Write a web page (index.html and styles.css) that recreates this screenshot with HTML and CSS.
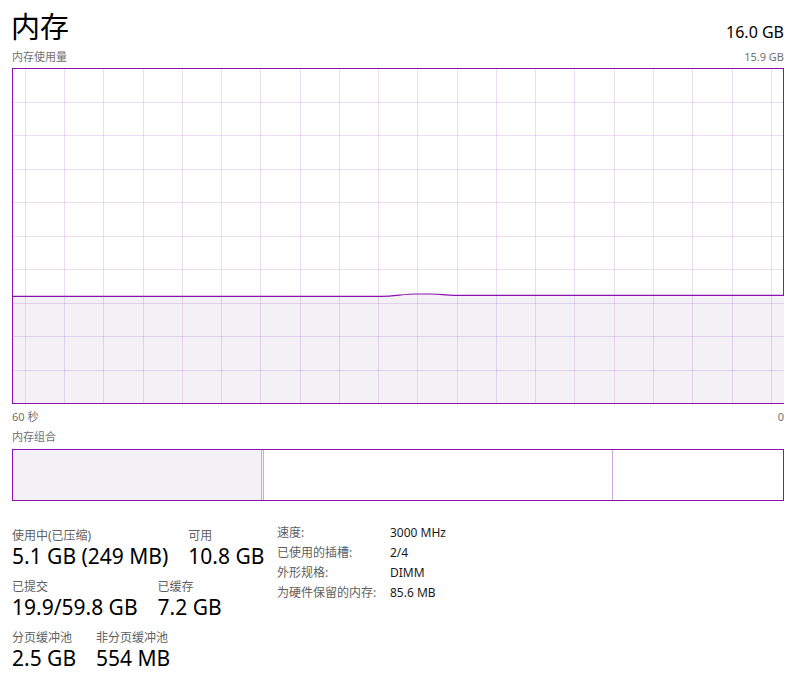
FILE: index.html
```html
<!DOCTYPE html>
<html lang="zh-CN">
<head>
<meta charset="utf-8">
<title>内存</title>
<link rel="stylesheet" href="styles.css">
</head>
<body>
<div class="page">
  <div class="top">
    <div class="title">内存</div>
    <div class="total">16.0 GB</div>
  </div>
  <div class="caption-row">
    <span>内存使用量</span>
    <span>15.9 GB</span>
  </div>
  <div class="graph">
    <svg class="graph-svg" viewBox="0 0 771 334" width="771" height="334" preserveAspectRatio="none">
      <path class="fill" d="M0 227.3 L369 227.3 C380 227.3 392 225 402 225 L418 225 C428 225 432 226.3 442 226.3 L771 226.3 L771 334 L0 334 Z"/>
      <g class="grid">
        <line x1="12.3" y1="0" x2="12.3" y2="334"/>
        <line x1="51.6" y1="0" x2="51.6" y2="334"/>
        <line x1="90.8" y1="0" x2="90.8" y2="334"/>
        <line x1="130.1" y1="0" x2="130.1" y2="334"/>
        <line x1="169.3" y1="0" x2="169.3" y2="334"/>
        <line x1="208.6" y1="0" x2="208.6" y2="334"/>
        <line x1="247.9" y1="0" x2="247.9" y2="334"/>
        <line x1="287.1" y1="0" x2="287.1" y2="334"/>
        <line x1="326.4" y1="0" x2="326.4" y2="334"/>
        <line x1="365.6" y1="0" x2="365.6" y2="334"/>
        <line x1="404.9" y1="0" x2="404.9" y2="334"/>
        <line x1="444.2" y1="0" x2="444.2" y2="334"/>
        <line x1="483.4" y1="0" x2="483.4" y2="334"/>
        <line x1="522.7" y1="0" x2="522.7" y2="334"/>
        <line x1="561.9" y1="0" x2="561.9" y2="334"/>
        <line x1="601.2" y1="0" x2="601.2" y2="334"/>
        <line x1="640.5" y1="0" x2="640.5" y2="334"/>
        <line x1="679.7" y1="0" x2="679.7" y2="334"/>
        <line x1="719.0" y1="0" x2="719.0" y2="334"/>
        <line x1="758.2" y1="0" x2="758.2" y2="334"/>
        <line x1="0" y1="33.3" x2="771" y2="33.3"/>
        <line x1="0" y1="66.8" x2="771" y2="66.8"/>
        <line x1="0" y1="100.3" x2="771" y2="100.3"/>
        <line x1="0" y1="133.8" x2="771" y2="133.8"/>
        <line x1="0" y1="167.3" x2="771" y2="167.3"/>
        <line x1="0" y1="200.8" x2="771" y2="200.8"/>
        <line x1="0" y1="234.3" x2="771" y2="234.3"/>
        <line x1="0" y1="267.8" x2="771" y2="267.8"/>
        <line x1="0" y1="301.3" x2="771" y2="301.3"/>
      </g>
      <path class="line" d="M0 227.3 L369 227.3 C380 227.3 392 225 402 225 L418 225 C428 225 432 226.3 442 226.3 L771 226.3"/>
    </svg>
  </div>
  <div class="axis-row">
    <span>60 秒</span>
    <span>0</span>
  </div>
  <div class="section-label">内存组合</div>
  <div class="composition">
    <div class="seg seg-inuse"></div>
    <div class="seg seg-modified"></div>
    <div class="seg seg-standby"></div>
    <div class="seg seg-free"></div>
  </div>
  <div class="stats">
    <div class="stats-left">
      <div class="stat-row">
        <div class="stat">
          <div class="stat-label">使用中(已压缩)</div>
          <div class="stat-value">5.1 GB (249 MB)</div>
        </div>
        <div class="stat">
          <div class="stat-label">可用</div>
          <div class="stat-value">10.8 GB</div>
        </div>
      </div>
      <div class="stat-row">
        <div class="stat">
          <div class="stat-label">已提交</div>
          <div class="stat-value">19.9/59.8 GB</div>
        </div>
        <div class="stat">
          <div class="stat-label">已缓存</div>
          <div class="stat-value">7.2 GB</div>
        </div>
      </div>
      <div class="stat-row">
        <div class="stat">
          <div class="stat-label">分页缓冲池</div>
          <div class="stat-value">2.5 GB</div>
        </div>
        <div class="stat">
          <div class="stat-label">非分页缓冲池</div>
          <div class="stat-value">554 MB</div>
        </div>
      </div>
    </div>
    <div class="stats-right">
      <div class="kv-label">速度:</div><div class="kv-value">3000 MHz</div>
      <div class="kv-label">已使用的插槽:</div><div class="kv-value">2/4</div>
      <div class="kv-label">外形规格:</div><div class="kv-value">DIMM</div>
      <div class="kv-label">为硬件保留的内存:</div><div class="kv-value">85.6 MB</div>
    </div>
  </div>
</div>
</body>
</html>
```

FILE: styles.css
```css
* { box-sizing: border-box; }
html, body { margin: 0; padding: 0; background: #ffffff; }
body {
  font-family: "Noto Sans", "Noto Sans CJK SC", sans-serif;
  color: #000;
}
.page {
  width: 796px;
  padding: 0 12px;
}
.top {
  display: flex;
  justify-content: space-between;
  align-items: baseline;
  height: 50px;
  padding-top: 5px;
}
.title {
  font-family: "Noto Sans CJK SC", sans-serif;
  font-size: 29px;
  line-height: 40px;
  font-weight: 400;
  margin-left: -1px;
}
.total {
  font-size: 16px;
  line-height: 20px;
}
.caption-row, .axis-row {
  display: flex;
  justify-content: space-between;
  font-size: 11px;
  line-height: 14px;
  color: #707070;
}
.caption-row { height: 18px; }
.axis-row { height: 22px; padding-top: 6px; }
.graph {
  height: 336px;
  border: 1px solid #8b12ae;
}
.graph-svg { display: block; }
.graph-svg .fill { fill: #f3f1f5; }
.graph-svg .grid line {
  stroke: rgba(139, 18, 174, 0.15);
  stroke-width: 1;
  shape-rendering: crispEdges;
}
.graph-svg .line {
  fill: none;
  stroke: #8b12ae;
  stroke-width: 1.2;
}
.section-label {
  font-size: 11px;
  line-height: 14px;
  color: #707070;
  height: 23px;
  padding-top: 4px;
}
.composition {
  display: flex;
  height: 52px;
  border: 1px solid #8b12ae;
}
.seg { height: 100%; }
.seg-inuse { width: 249px; background: #f3f1f5; border-right: 1px solid #cfa8de; }
.seg-modified { width: 2px; background: #f3f1f5; border-right: 1px solid #cfa8de; }
.seg-standby { width: 349px; background: #fff; border-right: 1px solid #cfa8de; }
.seg-free { flex: 1; background: #fff; }
.stats {
  display: flex;
  padding-top: 28px;
}
.stats-left {
  width: 265px;
  display: flex;
  flex-direction: column;
  gap: 10px;
}
.stat-row {
  display: flex;
  gap: 20px;
}
.stat-label {
  font-size: 12px;
  line-height: 14px;
  color: #5f5f5f;
}
.stat-value {
  font-size: 21px;
  line-height: 27px;
  color: #000;
}
.stats-right {
  display: grid;
  grid-template-columns: 113px auto;
  grid-auto-rows: 20px;
  margin-top: -6px;
  font-size: 12px;
  line-height: 20px;
}
.kv-label { color: #5f5f5f; }
.kv-value { color: #1a1a1a; }
```
